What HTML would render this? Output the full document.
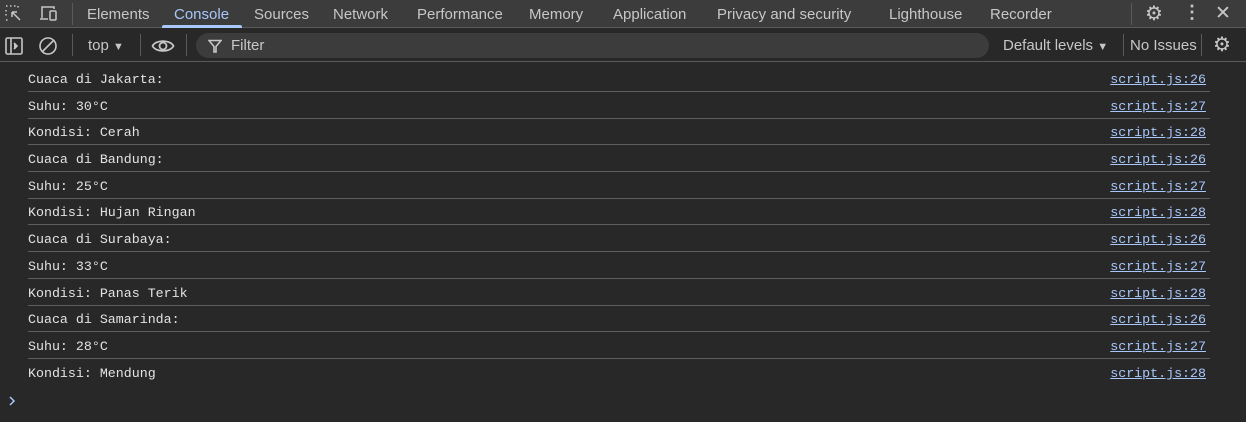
<!DOCTYPE html>
<html><head><style>
*{margin:0;padding:0;box-sizing:border-box}
body{width:1246px;height:422px;background:#282828;font-family:"Liberation Sans",sans-serif;overflow:hidden;position:relative;color:#e3e3e3}
.tabs{position:absolute;left:0;top:0;width:1246px;height:28px;background:#3c3c3c;border-bottom:1px solid #5a5a5a}
.tab{position:absolute;top:6px;font-size:15px;color:#c7c7c7}
.tb{position:absolute;left:0;top:29px;width:1246px;height:33px;background:#282828;border-bottom:1px solid #5a5a5a}
.t{position:absolute;font-size:15px;color:#c7c7c7}
.sep{position:absolute;width:1px;background:#5a5a5a}
.row{position:absolute;left:28px;width:1182px;height:27px;border-bottom:1px solid #5e5e5e;font-family:"Liberation Mono",monospace;font-size:13.3px;color:#e3e3e3}
.row span{position:absolute;top:7px}
.row a{position:absolute;right:4px;top:7px;color:#a8c7fa;text-decoration:underline}
</style></head><body>
<div class="tabs">
<svg style="position:absolute;left:4px;top:4px" width="20" height="20" viewBox="0 0 20 20" fill="none" stroke="#c7c7c7" stroke-width="1.5"><path d="M2 2h2M6 2h2M10 2h2M2 6v2M2 10v2M2 16h2M14 2v2" stroke-dasharray="1.5 1.5"/><path d="M8 8l8 8M8 8h5M8 8v5"/></svg>
<svg style="position:absolute;left:38px;top:4px" width="22" height="20" viewBox="0 0 22 20" fill="none" stroke="#c7c7c7" stroke-width="1.5"><path d="M4 14V3h12v2M2 15h8"/><rect x="12" y="7" width="6" height="9" rx="1"/></svg>
<div class="sep" style="left:72px;top:3px;height:22px"></div>
<div class="tab" style="left:87px">Elements</div>
<div class="tab" style="left:174px;color:#a8c7fa">Console</div>
<div style="position:absolute;left:162px;top:25px;width:80px;height:3px;background:#a8c7fa;border-radius:2px 2px 0 0"></div>
<div class="tab" style="left:254px">Sources</div>
<div class="tab" style="left:333px">Network</div>
<div class="tab" style="left:417px">Performance</div>
<div class="tab" style="left:529px">Memory</div>
<div class="tab" style="left:613px">Application</div>
<div class="tab" style="left:717px">Privacy and security</div>
<div class="tab" style="left:889px">Lighthouse</div>
<div class="tab" style="left:990px">Recorder</div>
<div class="sep" style="left:1131px;top:3px;height:22px"></div>
<div style="position:absolute;left:1145px;top:1px;font-size:20px;color:#c7c7c7">⚙</div>
<div style="position:absolute;left:1183px;top:2px;font-size:18px;color:#c7c7c7;font-weight:bold">⋮</div>
<div style="position:absolute;left:1215px;top:2px;font-size:19px;color:#c7c7c7">✕</div>
</div>
<div class="tb">
<svg style="position:absolute;left:4px;top:7px" width="20" height="20" viewBox="0 0 20 20" fill="none" stroke="#c7c7c7" stroke-width="1.6"><rect x="2" y="2" width="16" height="16" rx="1.5"/><path d="M7 2v16"/><path d="M10 7l3 3-3 3" fill="#c7c7c7"/></svg>
<svg style="position:absolute;left:38px;top:7px" width="20" height="20" viewBox="0 0 20 20" fill="none" stroke="#c7c7c7" stroke-width="1.6"><circle cx="10" cy="10" r="8"/><path d="M4.5 15.5l11-11"/></svg>
<div class="sep" style="left:72px;top:5px;height:22px"></div>
<div class="t" style="left:88px;top:8px">top <span style="font-size:11px">▼</span></div>
<div class="sep" style="left:140px;top:5px;height:22px"></div>
<svg style="position:absolute;left:151px;top:8px" width="24" height="18" viewBox="0 0 24 18" fill="none" stroke="#c7c7c7" stroke-width="1.8"><path d="M1.5 9C5 2.5 19 2.5 22.5 9 19 15.5 5 15.5 1.5 9z"/><circle cx="12" cy="9" r="3.5"/></svg>
<div class="sep" style="left:186px;top:5px;height:22px"></div>
<div style="position:absolute;left:196px;top:4px;width:793px;height:25px;background:#3c3c3c;border-radius:13px"></div>
<svg style="position:absolute;left:208px;top:10px" width="14" height="14" viewBox="0 0 14 14" fill="none" stroke="#c7c7c7" stroke-width="1.6"><path d="M1 1.5h12L8 7.5V13H6V7.5z"/></svg>
<div class="t" style="left:231px;top:8px">Filter</div>
<div class="t" style="left:1003px;top:8px">Default levels <span style="font-size:11px">▼</span></div>
<div class="sep" style="left:1123px;top:5px;height:22px"></div>
<div class="t" style="left:1130px;top:8px">No Issues</div>
<div class="sep" style="left:1201px;top:5px;height:22px"></div>
<div style="position:absolute;left:1213px;top:3px;font-size:20px;color:#c7c7c7">⚙</div>
</div>
<div class="row" style="top:65px"><span>Cuaca di Jakarta:</span><a>script.js:26</a></div>
<div class="row" style="top:92px"><span>Suhu: 30°C</span><a>script.js:27</a></div>
<div class="row" style="top:118px"><span>Kondisi: Cerah</span><a>script.js:28</a></div>
<div class="row" style="top:145px"><span>Cuaca di Bandung:</span><a>script.js:26</a></div>
<div class="row" style="top:172px"><span>Suhu: 25°C</span><a>script.js:27</a></div>
<div class="row" style="top:198px"><span>Kondisi: Hujan Ringan</span><a>script.js:28</a></div>
<div class="row" style="top:225px"><span>Cuaca di Surabaya:</span><a>script.js:26</a></div>
<div class="row" style="top:252px"><span>Suhu: 33°C</span><a>script.js:27</a></div>
<div class="row" style="top:279px"><span>Kondisi: Panas Terik</span><a>script.js:28</a></div>
<div class="row" style="top:305px"><span>Cuaca di Samarinda:</span><a>script.js:26</a></div>
<div class="row" style="top:332px"><span>Suhu: 28°C</span><a>script.js:27</a></div>
<div class="row" style="top:359px;border-bottom:none"><span>Kondisi: Mendung</span><a>script.js:28</a></div>
<svg style="position:absolute;left:8px;top:395px" width="8" height="12" viewBox="0 0 8 12" fill="none" stroke="#a8c7fa" stroke-width="1.5"><path d="M2 2l4 4-4 4"/></svg>
</body></html>
